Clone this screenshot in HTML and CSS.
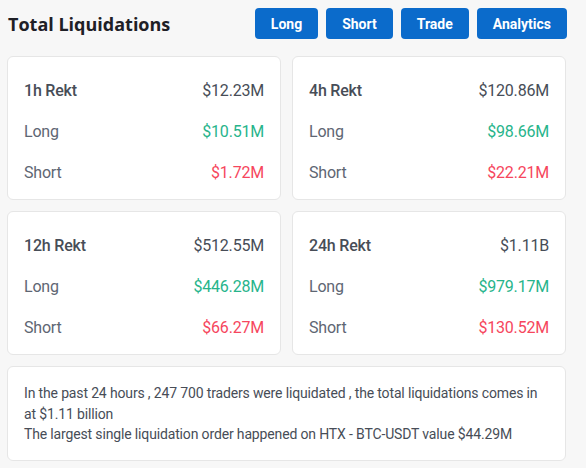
FILE: index.html
```html
<!DOCTYPE html>
<html lang="en">
<head>
<meta charset="utf-8">
<title>Total Liquidations</title>
<link rel="stylesheet" href="styles.css">
</head>
<body>
<div class="wrap">
  <header class="head">
    <h1 class="title">Total Liquidations</h1>
    <nav class="btns">
      <a class="btn">Long</a>
      <a class="btn">Short</a>
      <a class="btn">Trade</a>
      <a class="btn">Analytics</a>
    </nav>
  </header>
  <section class="grid">
    <div class="card">
      <div class="row hd"><span>1h Rekt</span><span class="val">$12.23M</span></div>
      <div class="row"><span>Long</span><span class="up">$10.51M</span></div>
      <div class="row"><span>Short</span><span class="down">$1.72M</span></div>
    </div>
    <div class="card">
      <div class="row hd"><span>4h Rekt</span><span class="val">$120.86M</span></div>
      <div class="row"><span>Long</span><span class="up">$98.66M</span></div>
      <div class="row"><span>Short</span><span class="down">$22.21M</span></div>
    </div>
    <div class="card">
      <div class="row hd"><span>12h Rekt</span><span class="val">$512.55M</span></div>
      <div class="row"><span>Long</span><span class="up">$446.28M</span></div>
      <div class="row"><span>Short</span><span class="down">$66.27M</span></div>
    </div>
    <div class="card">
      <div class="row hd"><span>24h Rekt</span><span class="val">$1.11B</span></div>
      <div class="row"><span>Long</span><span class="up">$979.17M</span></div>
      <div class="row"><span>Short</span><span class="down">$130.52M</span></div>
    </div>
  </section>
  <div class="note">
    <p>In the past 24 hours , 247 700 traders were liquidated , the total liquidations comes in at $1.11 billion</p>
    <p>The largest single liquidation order happened on HTX - BTC-USDT value $44.29M</p>
  </div>
</div>
</body>
</html>
```
FILE: styles.css
```css
html, body {
  margin: 0;
  padding: 0;
  background: #f7f7f7;
}
body {
  font-family: Roboto, "Liberation Sans", sans-serif;
  color: #474d57;
}
.wrap {
  width: 559px;
  margin-left: 7px;
  padding-top: 8px;
}
.head {
  display: flex;
  align-items: center;
  justify-content: space-between;
  height: 31px;
  margin-bottom: 17px;
}
.title {
  margin: 0 0 0 1px;
  font-family: "Open Sans", "Liberation Sans", sans-serif;
  font-size: 18px;
  font-weight: 700;
  color: #1e2026;
}
.btns {
  display: flex;
  gap: 8px;
  margin-right: -1px;
}
.btn {
  display: flex;
  align-items: center;
  justify-content: center;
  height: 31px;
  padding: 0 16px;
  background: #0b6bcb;
  color: #fff;
  border-radius: 4px;
  font-family: Roboto, "Liberation Sans", sans-serif;
  font-weight: 700;
  font-size: 14px;
}
.grid {
  display: grid;
  grid-template-columns: 1fr 1fr;
  gap: 11px;
}
.card {
  background: #fff;
  border: 1px solid #e6e6e6;
  border-radius: 6px;
  padding: 13px 16px 6px;
}
.row {
  display: flex;
  justify-content: space-between;
  align-items: center;
  height: 41px;
  font-size: 16px;
  letter-spacing: -0.2px;
  color: #5e6673;
}
.row.hd {
  font-weight: 500;
  color: #474d57;
}
.row .val {
  font-weight: 400;
  color: #474d57;
}
.up { color: #27b48b; }
.down { color: #f6465d; }
.note {
  margin-top: 11px;
  background: #fff;
  border: 1px solid #e6e6e6;
  border-radius: 6px;
  padding: 16px 16px 15px;
  font-size: 14px;
  letter-spacing: -0.15px;
  line-height: 20.5px;
  color: #474d57;
}
.note p {
  margin: 0;
}
```
